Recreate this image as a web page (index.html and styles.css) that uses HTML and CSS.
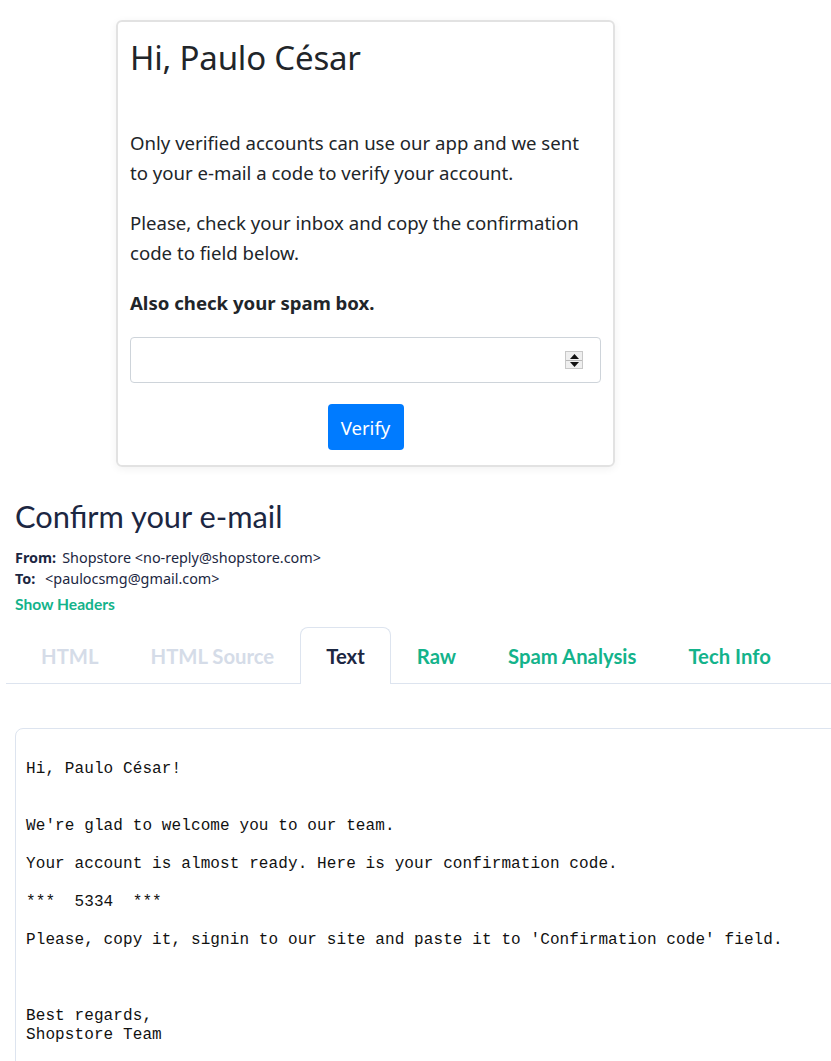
FILE: index.html
```html
<!DOCTYPE html>
<html lang="en">
<head>
<meta charset="utf-8">
<title>Confirm your e-mail</title>
<link rel="stylesheet" href="styles.css">
</head>
<body>
<div class="page">
  <div class="top">
    <div class="card">
      <h1 class="card-title">Hi, Paulo César</h1>
      <p class="lead">Only verified accounts can use our app and we sent to your e-mail a code to verify your account.</p>
      <p class="lead">Please, check your inbox and copy the confirmation code to field below.</p>
      <p class="lead strong">Also check your spam box.</p>
      <div class="field">
        <span class="field-value"></span>
        <span class="spin">
          <span class="spin-btn"><svg width="9" height="5" viewBox="0 0 9 5"><path d="M4.5 0L9 5H0z" fill="#111"/></svg></span>
          <span class="spin-btn"><svg width="9" height="5" viewBox="0 0 9 5"><path d="M0 0H9L4.5 5z" fill="#111"/></svg></span>
        </span>
      </div>
      <div class="actions"><button class="btn">Verify</button></div>
    </div>
  </div>

  <div class="mail">
    <h2 class="mail-title">Confirm your e-mail</h2>
    <div class="meta"><b>From:</b>Shopstore &lt;no-reply@shopstore.com&gt;</div>
    <div class="meta"><b>To:</b>&nbsp;&lt;paulocsmg@gmail.com&gt;</div>
    <a class="show-headers">Show Headers</a>
    <div class="tabs">
      <span class="tab disabled">HTML</span>
      <span class="tab disabled">HTML Source</span>
      <span class="tab active">Text</span>
      <span class="tab">Raw</span>
      <span class="tab">Spam Analysis</span>
      <span class="tab">Tech Info</span>
    </div>
    <div class="panel"><pre class="plain">Hi, Paulo César!


We're glad to welcome you to our team.

Your account is almost ready. Here is your confirmation code.

***  5334  ***

Please, copy it, signin to our site and paste it to 'Confirmation code' field.



Best regards,
Shopstore Team
</pre></div>
  </div>
</div>
</body>
</html>
```
FILE: styles.css
```css
* { box-sizing: border-box; }
html, body { margin: 0; padding: 0; background: #fff; }
body { overflow: hidden; }
.page { width: 831px; height: 1061px; overflow: hidden; }

.top { padding: 20px 0 0 116px; }
.card {
  width: 499px;
  border: 2px solid #e2e2e2;
  border-radius: 6px;
  box-shadow: 0 2px 8px rgba(0,0,0,0.06);
  padding: 14px 12px 15px 12px;
  font-family: "Noto Sans", "Open Sans", sans-serif;
  color: #212529;
}
.card-title {
  margin: 0 0 48px 0;
  font-weight: 400;
  font-size: 33px;
  line-height: 44px;
  letter-spacing: -0.2px;
}
.lead {
  margin: 0 0 20px 0;
  font-size: 18.6px;
  line-height: 30px;
}
.lead.strong { font-weight: 700; margin-bottom: 19px; }
.field {
  height: 46px;
  border: 1px solid #ced4da;
  border-radius: 4px;
  display: flex;
  align-items: center;
  justify-content: flex-end;
  padding-right: 17px;
}
.spin {
  display: flex;
  flex-direction: column;
  width: 18px;
  border: 1px solid #c8c8c8;
  background: #efefef;
}
.spin-btn {
  height: 8px;
  display: flex;
  align-items: center;
  justify-content: center;
}
.spin-btn + .spin-btn { border-top: 1px solid #b8b8b8; }
.actions { display: flex; justify-content: center; margin-top: 21px; }
.btn {
  width: 76px;
  height: 46px;
  background: #007bff;
  color: #fff;
  border: 0;
  border-radius: 4px;
  font-family: "Noto Sans", "Open Sans", sans-serif;
  font-size: 18.6px;
  padding: 0;
}

.mail {
  margin-top: 32px;
  font-family: Lato, "Noto Sans", sans-serif;
  color: #1c2742;
}
.mail-title {
  margin: 0 0 12px 15px;
  font-weight: 400;
  font-size: 30.8px;
  line-height: 36px;
}
.meta {
  margin-left: 15px;
  font-family: "Noto Sans", sans-serif;
  font-size: 14.4px;
  line-height: 21px;
  color: #1c2742;
}
.meta b { font-weight: 700; margin-right: 6px; }
.show-headers {
  display: block;
  margin: 6px 0 0 15px;
  font-size: 15.6px;
  line-height: 18px;
  font-weight: 700;
  color: #14b38b;
}
.tabs {
  margin: 14px 0 0 6px;
  padding-left: 9px;
  display: flex;
  border-bottom: 1px solid #dde4ef;
  width: 900px;
}
.tab {
  height: 56px;
  padding: 0 25px;
  border: 1px solid transparent;
  border-bottom: 0;
  display: flex;
  align-items: center;
  font-size: 20.3px;
  font-weight: 700;
  color: #14b38b;
  margin-bottom: -1px;
  background: #fff;
}
.tab.disabled { color: #d5dce8; }
.tab.active {
  color: #1c2742;
  border-color: #dde4ef;
  border-top-left-radius: 8px;
  border-top-right-radius: 8px;
  height: 57px;
}
.panel {
  margin: 44px 0 0 15px;
  width: 900px;
  border: 1px solid #dde4ef;
  border-radius: 8px 0 0 0;
  padding: 31px 10px 0 10px;
  height: 400px;
}
.plain {
  margin: 0;
  font-family: "Liberation Mono", "Courier New", monospace;
  font-size: 16px;
  letter-spacing: 0.1px;
  line-height: 19px;
  color: #111;
}
```
